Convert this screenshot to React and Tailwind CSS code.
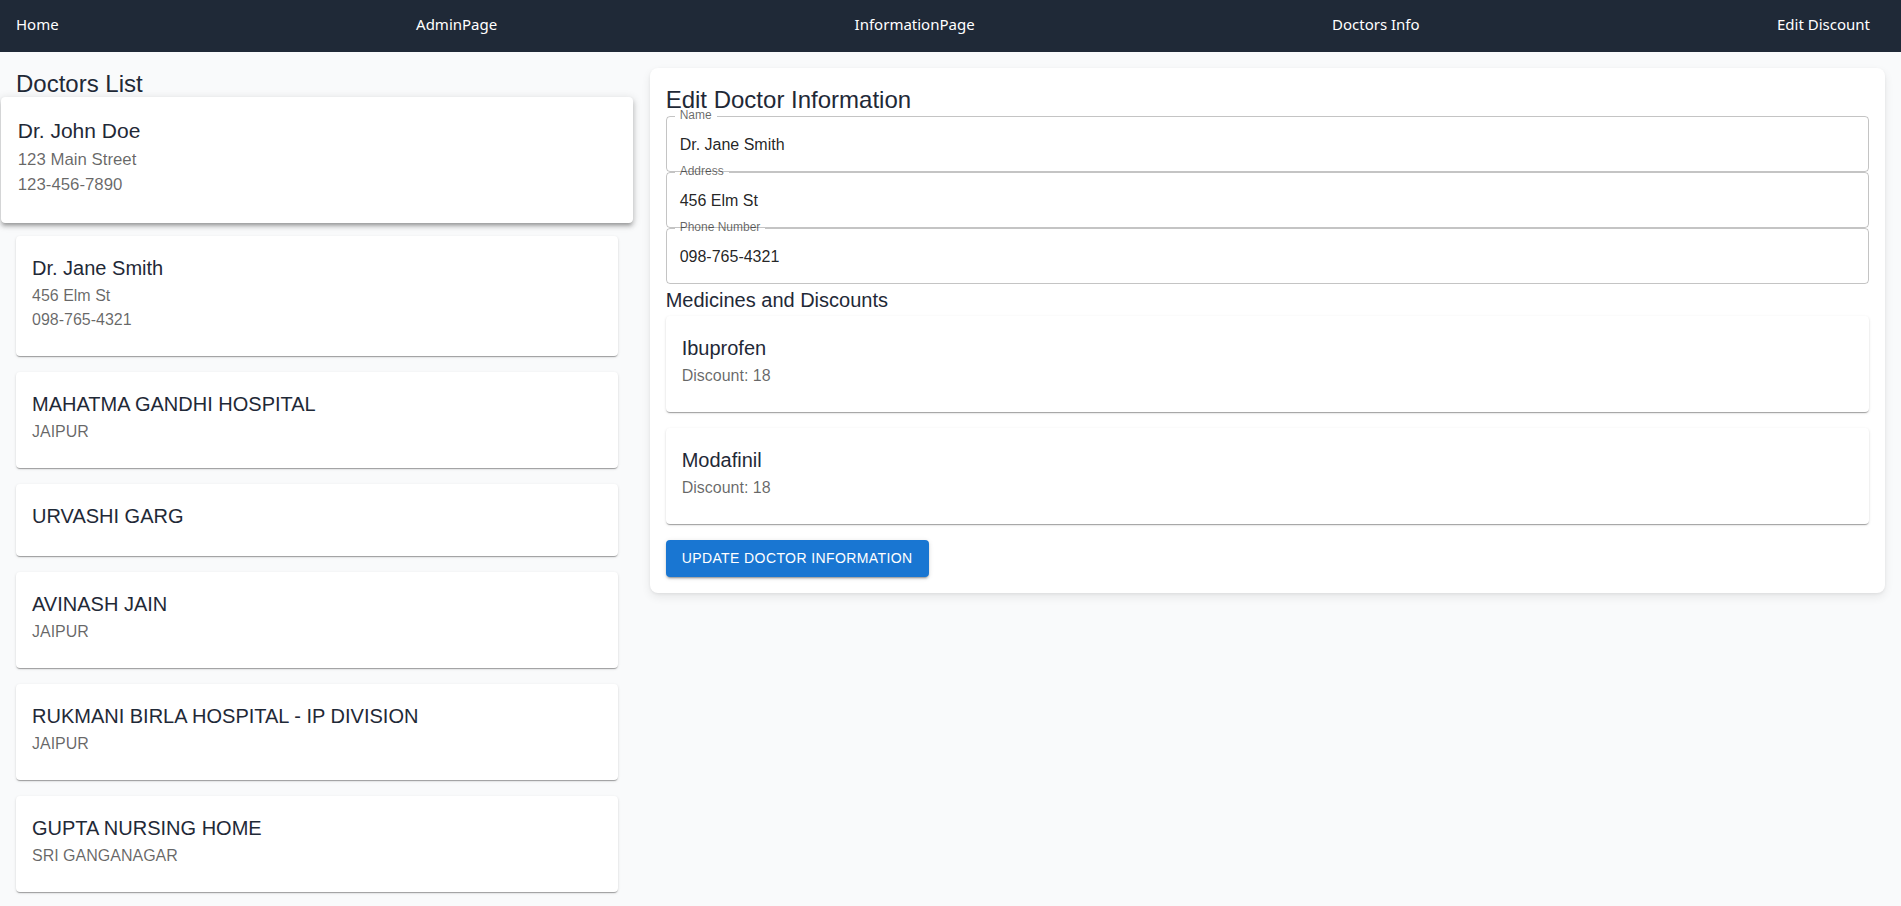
import React from "react";

const cardShadow =
  "shadow-[0_2px_1px_-1px_rgba(0,0,0,0.2),0_1px_1px_0_rgba(0,0,0,0.14),0_1px_3px_0_rgba(0,0,0,0.12)]";

function InfoCard({ title, lines, hovered }) {
  return (
    <div
      className={
        "bg-white rounded-[4px] px-4 pt-4 pb-6 mb-4 " +
        (hovered
          ? "scale-[1.05] shadow-[0_3px_3px_-2px_rgba(0,0,0,0.2),0_3px_4px_0_rgba(0,0,0,0.14),0_1px_8px_0_rgba(0,0,0,0.12)]"
          : cardShadow)
      }
    >
      <div className="text-[20px] leading-[32px] text-[#1f2937]">{title}</div>
      {lines.map((l, i) => (
        <div key={i} className="text-[16px] leading-[24px] text-[rgba(0,0,0,0.6)]">
          {l}
        </div>
      ))}
    </div>
  );
}

function OutlinedField({ label, value }) {
  return (
    <div className="relative h-[56px]">
      <div className="px-[14px] py-[16.5px] text-[16px] leading-[23px] text-[rgba(0,0,0,0.87)]">
        {value}
      </div>
      <label className="absolute left-[14px] -top-[9px] text-[12px] leading-[17px] text-[rgba(0,0,0,0.6)] z-10 whitespace-nowrap">
        {label}
      </label>
      <fieldset className="absolute left-0 right-0 bottom-0 -top-[5px] m-0 px-2 py-0 border border-solid border-[rgba(0,0,0,0.23)] rounded-[4px] pointer-events-none min-w-0">
        <legend className="block w-auto p-0 h-[11px] text-[12px] invisible overflow-hidden whitespace-nowrap max-w-full">
          <span className="inline-block px-[5px]">{label}</span>
        </legend>
      </fieldset>
    </div>
  );
}

export default function App() {
  const doctors = [
    { title: "Dr. John Doe", lines: ["123 Main Street", "123-456-7890"], hovered: true },
    { title: "Dr. Jane Smith", lines: ["456 Elm St", "098-765-4321"] },
    { title: "MAHATMA GANDHI HOSPITAL", lines: ["JAIPUR"] },
    { title: "URVASHI GARG", lines: [] },
    { title: "AVINASH JAIN", lines: ["JAIPUR"] },
    { title: "RUKMANI BIRLA HOSPITAL - IP DIVISION", lines: ["JAIPUR"] },
    { title: "GUPTA NURSING HOME", lines: ["SRI GANGANAGAR"] },
  ];
  const navItems = ["Home", "AdminPage", "InformationPage", "Doctors Info", "Edit Discount"];

  return (
    <div className="min-h-screen bg-[#f9fafb] font-['Liberation_Sans',Arial,sans-serif]">
      <nav className="h-[52px] bg-[#1f2937] flex items-center justify-between pl-4 pr-[31px] pb-1 text-white text-[15px] font-['Noto_Sans',sans-serif]">
        {navItems.map((n) => (
          <span key={n}>{n}</span>
        ))}
      </nav>
      <div className="flex">
        <div className="w-1/3 p-4">
          <div className="text-[24px] leading-[32px] text-[#1f2937]">Doctors List</div>
          {doctors.map((d) => (
            <InfoCard key={d.title} {...d} />
          ))}
        </div>
        <div className="w-2/3 p-4">
          <div className="bg-white rounded-lg p-4 shadow-[0_4px_10px_0_rgba(0,0,0,0.08),0_1px_3px_0_rgba(0,0,0,0.06)]">
            <div className="text-[24px] leading-[32px] text-[#1f2937]">Edit Doctor Information</div>
            <OutlinedField label="Name" value="Dr. Jane Smith" />
            <OutlinedField label="Address" value="456 Elm St" />
            <OutlinedField label="Phone Number" value="098-765-4321" />
            <div className="text-[20px] leading-[32px] text-[#1f2937]">Medicines and Discounts</div>
            <InfoCard title="Ibuprofen" lines={["Discount: 18"]} />
            <InfoCard title="Modafinil" lines={["Discount: 18"]} />
            <div>
              <button className="bg-[#1976d2] text-white text-[14px] leading-[24.5px] font-medium uppercase tracking-[0.4px] px-4 py-[6px] rounded-[4px] shadow-[0_3px_1px_-2px_rgba(0,0,0,0.2),0_2px_2px_0_rgba(0,0,0,0.14),0_1px_5px_0_rgba(0,0,0,0.12)]">
                Update Doctor Information
              </button>
            </div>
          </div>
        </div>
      </div>
    </div>
  );
}
